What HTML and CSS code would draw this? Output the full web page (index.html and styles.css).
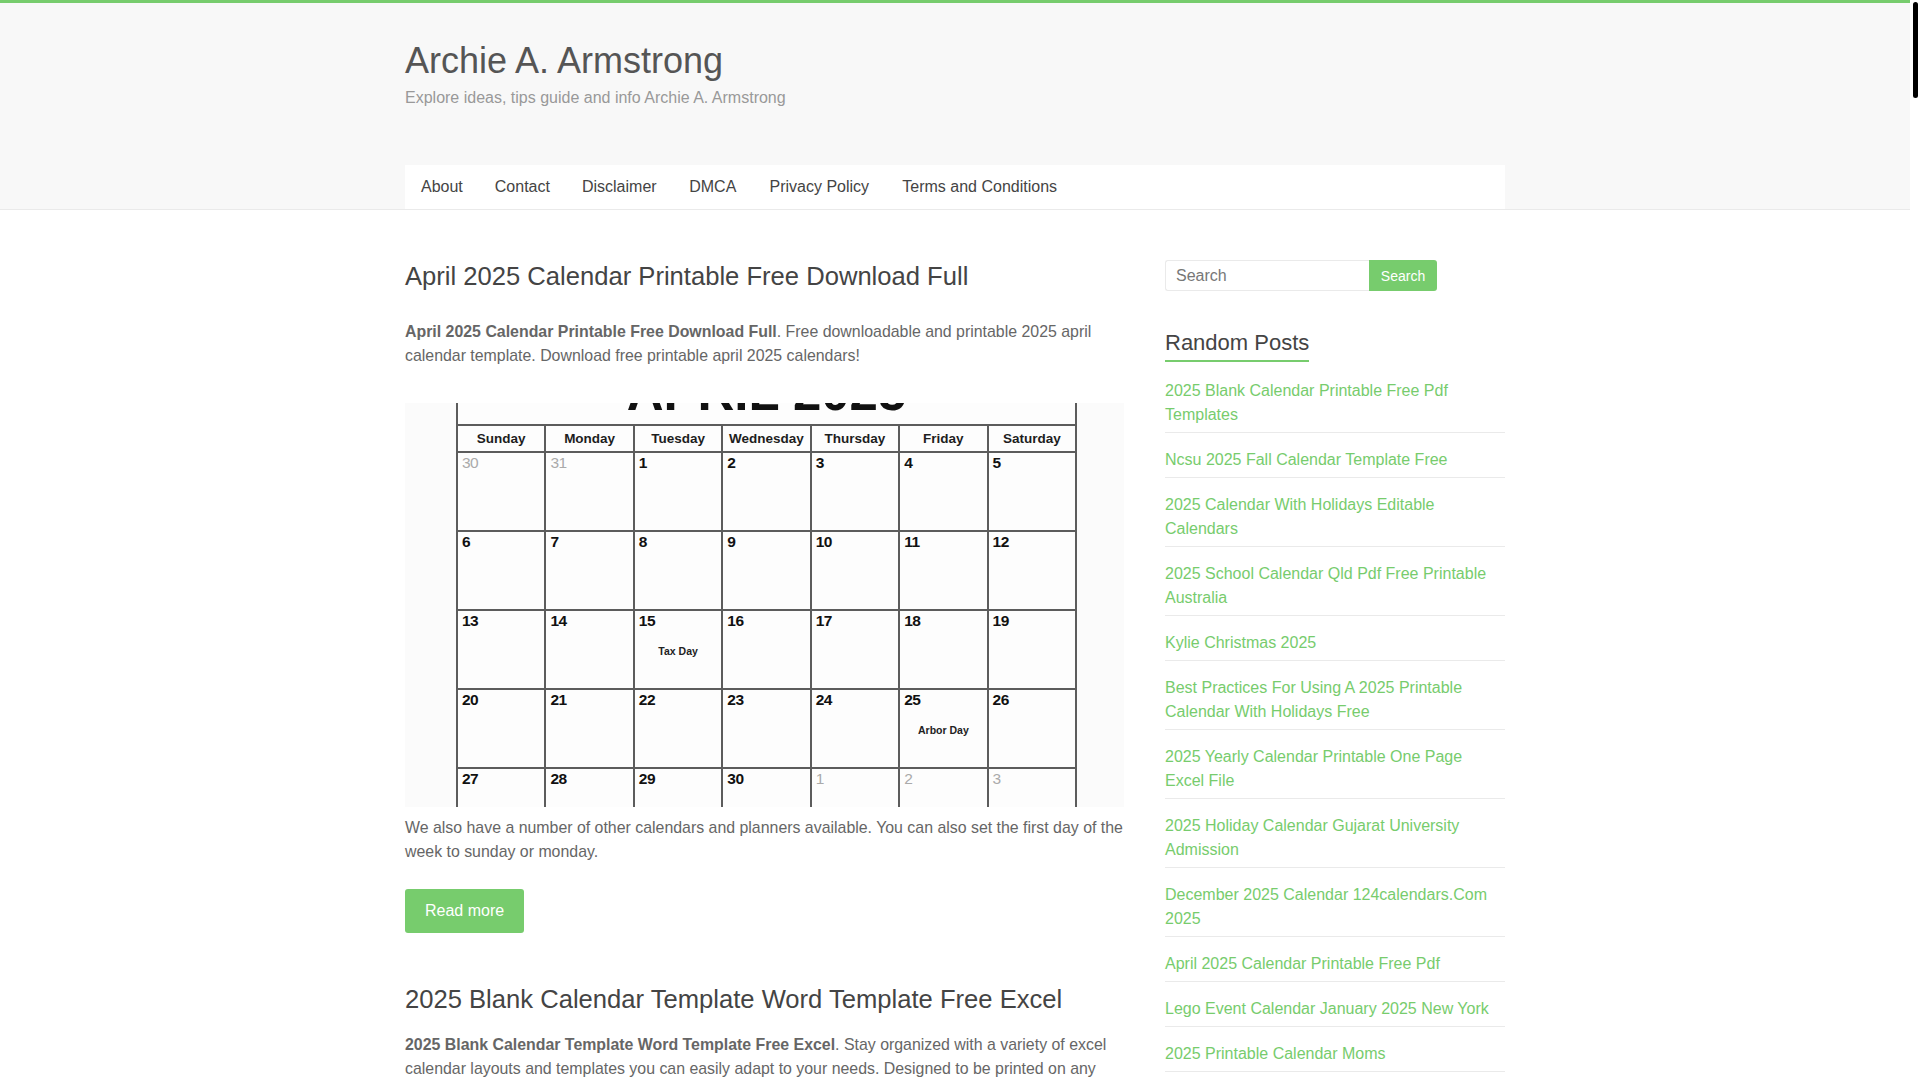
FILE: index.html
```html
<!DOCTYPE html>
<html lang="en">
<head>
<meta charset="utf-8">
<title>Archie A. Armstrong</title>
<link rel="stylesheet" href="styles.css">
</head>
<body>
<div class="page">
<header class="site-header">
  <div class="container header-inner">
    <div class="branding">
      <h1 class="site-title"><a href="#">Archie A. Armstrong</a></h1>
      <p class="site-description">Explore ideas, tips guide and info Archie A. Armstrong</p>
    </div>
    <nav class="main-nav">
      <ul>
        <li><a href="#">About</a></li>
        <li><a href="#">Contact</a></li>
        <li><a href="#">Disclaimer</a></li>
        <li><a href="#">DMCA</a></li>
        <li><a href="#">Privacy Policy</a></li>
        <li><a href="#">Terms and Conditions</a></li>
      </ul>
    </nav>
  </div>
</header>

<div class="container site-main">
  <main class="primary">
    <article class="post">
      <h2 class="entry-title"><a href="#">April 2025 Calendar Printable Free Download Full</a></h2>
      <p><strong>April 2025 Calendar Printable Free Download Full</strong>. Free downloadable and printable 2025 april calendar template. Download free printable april 2025 calendars!</p>
      <div class="post-image">
        <div class="cal">
          <div class="cal-title"><span>APRIL 2025</span></div>
          <div class="cal-grid">
            <div class="cal-head">Sunday</div>
            <div class="cal-head">Monday</div>
            <div class="cal-head">Tuesday</div>
            <div class="cal-head">Wednesday</div>
            <div class="cal-head">Thursday</div>
            <div class="cal-head">Friday</div>
            <div class="cal-head">Saturday</div>

            <div class="cal-cell"><span class="num muted">30</span></div>
            <div class="cal-cell"><span class="num muted">31</span></div>
            <div class="cal-cell"><span class="num">1</span></div>
            <div class="cal-cell"><span class="num">2</span></div>
            <div class="cal-cell"><span class="num">3</span></div>
            <div class="cal-cell"><span class="num">4</span></div>
            <div class="cal-cell"><span class="num">5</span></div>

            <div class="cal-cell"><span class="num">6</span></div>
            <div class="cal-cell"><span class="num">7</span></div>
            <div class="cal-cell"><span class="num">8</span></div>
            <div class="cal-cell"><span class="num">9</span></div>
            <div class="cal-cell"><span class="num">10</span></div>
            <div class="cal-cell"><span class="num">11</span></div>
            <div class="cal-cell"><span class="num">12</span></div>

            <div class="cal-cell"><span class="num">13</span></div>
            <div class="cal-cell"><span class="num">14</span></div>
            <div class="cal-cell"><span class="num">15</span><span class="note">Tax Day</span></div>
            <div class="cal-cell"><span class="num">16</span></div>
            <div class="cal-cell"><span class="num">17</span></div>
            <div class="cal-cell"><span class="num">18</span></div>
            <div class="cal-cell"><span class="num">19</span></div>

            <div class="cal-cell"><span class="num">20</span></div>
            <div class="cal-cell"><span class="num">21</span></div>
            <div class="cal-cell"><span class="num">22</span></div>
            <div class="cal-cell"><span class="num">23</span></div>
            <div class="cal-cell"><span class="num">24</span></div>
            <div class="cal-cell"><span class="num">25</span><span class="note">Arbor Day</span></div>
            <div class="cal-cell"><span class="num">26</span></div>

            <div class="cal-cell"><span class="num">27</span></div>
            <div class="cal-cell"><span class="num">28</span></div>
            <div class="cal-cell"><span class="num">29</span></div>
            <div class="cal-cell"><span class="num">30</span></div>
            <div class="cal-cell"><span class="num muted">1</span></div>
            <div class="cal-cell"><span class="num muted">2</span></div>
            <div class="cal-cell"><span class="num muted">3</span></div>
          </div>
        </div>
      </div>
      <p class="after-image">We also have a number of other calendars and planners available. You can also set the first day of the week to sunday or monday.</p>
      <a class="read-more" href="#">Read more</a>
    </article>

    <article class="post">
      <h2 class="entry-title tight"><a href="#">2025 Blank Calendar Template Word Template Free Excel</a></h2>
      <p><strong>2025 Blank Calendar Template Word Template Free Excel</strong>. Stay organized with a variety of excel calendar layouts and templates you can easily adapt to your needs. Designed to be printed on any standard paper size, these templates keep every month of the year in view.</p>
      <div class="post-image plain"></div>
      <p class="after-image">Each layout can be edited in Microsoft Word or Excel before printing, so you can add your own holidays, notes and events.</p>
      <a class="read-more" href="#">Read more</a>
    </article>

    <article class="post">
      <h2 class="entry-title tight"><a href="#">2025 Blank Calendar Printable Free Pdf Templates</a></h2>
      <p><strong>2025 Blank Calendar Printable Free Pdf Templates</strong>. Blank monthly and yearly calendars for 2025 in pdf format, ready to print at home or at the office.</p>
      <div class="post-image plain"></div>
      <p class="after-image">Choose a portrait or landscape layout and print as many copies as you need.</p>
      <a class="read-more" href="#">Read more</a>
    </article>

    <article class="post">
      <h2 class="entry-title tight"><a href="#">Ncsu 2025 Fall Calendar Template Free</a></h2>
      <p><strong>Ncsu 2025 Fall Calendar Template Free</strong>. Keep track of the fall semester with a free printable academic calendar template.</p>
      <div class="post-image plain"></div>
      <p class="after-image">All important dates for classes, exams and breaks are easy to add.</p>
      <a class="read-more" href="#">Read more</a>
    </article>

    <nav class="pagination">
      <a href="#">&larr; Older posts</a>
    </nav>
  </main>

  <aside class="secondary">
    <section class="widget widget-search">
      <form class="search-form" action="#">
        <input class="search-field" type="text" placeholder="Search">
        <button class="search-submit" type="button">Search</button>
      </form>
    </section>
    <section class="widget widget-random">
      <h3 class="widget-title"><span>Random Posts</span></h3>
      <ul>
        <li><a href="#">2025 Blank Calendar Printable Free Pdf Templates</a></li>
        <li><a href="#">Ncsu 2025 Fall Calendar Template Free</a></li>
        <li><a href="#">2025 Calendar With Holidays Editable Calendars</a></li>
        <li><a href="#">2025 School Calendar Qld Pdf Free Printable Australia</a></li>
        <li><a href="#">Kylie Christmas 2025</a></li>
        <li><a href="#">Best Practices For Using A 2025 Printable Calendar With Holidays Free</a></li>
        <li><a href="#">2025 Yearly Calendar Printable One Page Excel File</a></li>
        <li><a href="#">2025 Holiday Calendar Gujarat University Admission</a></li>
        <li><a href="#">December 2025 Calendar 124calendars.Com 2025</a></li>
        <li><a href="#">April 2025 Calendar Printable Free Pdf</a></li>
        <li><a href="#">Lego Event Calendar January 2025 New York</a></li>
        <li><a href="#">2025 Printable Calendar Moms</a></li>
      </ul>
    </section>
  </aside>
</div>

<footer class="site-footer">
  <div class="container footer-inner">Copyright &copy; 2025 Archie A. Armstrong. All Rights Reserved.</div>
</footer>
</div>
<div class="scroll-rail" aria-hidden="true"><div class="scroll-thumb"></div></div>
</body>
</html>
```

FILE: styles.css
```css
html, body {
  margin: 0;
  padding: 0;
  height: 100%;
  overflow: hidden;
}
body {
  display: flex;
  background: #fff;
  color: #666;
  font-family: "Liberation Sans", Arial, sans-serif;
  font-size: 16px;
  line-height: 24px;
}
.page {
  flex: 1;
  min-width: 0;
  height: 100vh;
  overflow-y: auto;
  scrollbar-width: none;
}
.page::-webkit-scrollbar {
  display: none;
}
.scroll-rail {
  flex: 0 0 10px;
  height: 100vh;
  background: #fff;
}
.scroll-thumb {
  width: 5px;
  height: 96px;
  margin: 2px 0 0 3px;
  background: #000;
  border-radius: 3px;
}
a {
  text-decoration: none;
}
.container {
  width: 1100px;
  margin: 0 auto;
}

/* Header */
.site-header {
  background: #f8f8f8;
  border-top: 3px solid #77cc6d;
  border-bottom: 1px solid #eaeaea;
}
.header-inner {
  padding-top: 36px;
}
.site-title {
  margin: 0;
  font-size: 36px;
  line-height: 1.2;
  font-weight: normal;
}
.site-title a {
  color: #555;
}
.site-description {
  margin: 4px 0 0;
  font-size: 16px;
  line-height: 24px;
  color: #999;
}
.main-nav {
  margin-top: 55px;
  background: #fff;
  height: 44px;
}
.main-nav ul {
  display: flex;
  margin: 0;
  padding: 0;
  list-style: none;
}
.main-nav a {
  display: block;
  padding: 10px 16px;
  line-height: 24px;
  color: #444;
  font-size: 16px;
}
.main-nav li:nth-child(n+4) a {
  padding-left: 16.6px;
  padding-right: 16.6px;
}

/* Main layout */
.site-main {
  display: flex;
  justify-content: space-between;
  align-items: flex-start;
  padding-top: 50px;
}
.primary {
  width: 720px;
}
.secondary {
  width: 340px;
}

/* Posts */
.post {
  margin-bottom: 50px;
}
.entry-title {
  margin: 0 0 27px;
  font-size: 25.6px;
  line-height: 1.3;
  font-weight: normal;
}
.entry-title.tight {
  margin-bottom: 16px;
}
.entry-title a {
  color: #444;
}
.post p {
  margin: 0;
  font-size: 15.9px;
}
.post strong {
  color: #666;
}
.post-image {
  margin-top: 35px;
  width: 719px;
  height: 404px;
  overflow: hidden;
  background: #fbfbfb;
}
.post-image.plain {
  background: #f4f4f4;
}
.post .after-image {
  margin-top: 9px;
}
.read-more {
  display: inline-block;
  margin-top: 25px;
  padding: 10px 20px;
  line-height: 24px;
  background: #77cc6d;
  color: #fff;
  border-radius: 3px;
}
.pagination {
  padding-bottom: 40px;
}
.pagination a {
  color: #77cc6d;
}

/* Calendar picture */
.cal {
  margin-left: 51px;
  width: 621px;
  box-sizing: border-box;
  border-left: 2px solid #5c5c5c;
  border-right: 2px solid #5c5c5c;
  background: #fdfdfd;
  font-family: "Liberation Sans", Arial, sans-serif;
}
.cal-title {
  height: 21px;
  overflow: hidden;
  text-align: center;
}
.cal-title span {
  display: block;
  margin-top: -36px;
  font-size: 51px;
  line-height: 51px;
  font-weight: bold;
  color: #111;
}
.cal-grid {
  display: grid;
  grid-template-columns: repeat(7, 1fr);
  grid-template-rows: 25px repeat(5, 77px);
  gap: 2px;
  background: #5c5c5c;
  border-top: 2px solid #5c5c5c;
}
.cal-head {
  background: #fdfdfd;
  text-align: center;
  font-size: 13.5px;
  line-height: 25px;
  font-weight: bold;
  color: #1e1e1e;
}
.cal-cell {
  background: #fdfdfd;
  display: flex;
  flex-direction: column;
}
.num {
  padding: 2px 4px;
  font-size: 15.5px;
  line-height: 15px;
  font-weight: bold;
  letter-spacing: -0.5px;
  color: #111;
}
.num.muted {
  color: #aaa;
  font-weight: normal;
}
.note {
  margin-top: 15px;
  text-align: center;
  font-size: 10.5px;
  line-height: 12px;
  font-weight: bold;
  color: #222;
}

/* Sidebar */
.widget {
  margin-bottom: 38px;
}
.widget-search {
  margin-bottom: 39px;
}
.search-form {
  display: flex;
  height: 31px;
}
.search-field {
  box-sizing: border-box;
  width: 204px;
  height: 31px;
  margin: 0;
  padding: 0 10px;
  border: 1px solid #eaeaea;
  border-right: none;
  border-radius: 3px 0 0 3px;
  font-family: "Liberation Sans", Arial, sans-serif;
  font-size: 16px;
  color: #666;
  outline: none;
}
.search-field::placeholder {
  color: #777;
}
.search-submit {
  box-sizing: border-box;
  width: 68px;
  height: 31px;
  margin: 0;
  padding: 0;
  border: none;
  border-radius: 0 3px 3px 0;
  background: #77cc6d;
  color: #fff;
  font-family: "Liberation Sans", Arial, sans-serif;
  font-size: 14px;
}
.widget-title {
  display: flex;
  margin: 0;
  font-size: 22px;
  font-weight: normal;
  color: #444;
}
.widget-title span {
  line-height: 1.2;
  padding-bottom: 3px;
  border-bottom: 2px solid #77cc6d;
}
.widget-random ul {
  margin: 2px 0 0;
  padding: 0;
  list-style: none;
}
.widget-random li {
  padding: 15px 0 5px;
  border-bottom: 1px solid #eaeaea;
}
.widget-random a {
  color: #77cc6d;
}

/* Footer */
.site-footer {
  background: #f8f8f8;
  border-top: 1px solid #eaeaea;
}
.footer-inner {
  padding: 30px 0;
  font-size: 14px;
  color: #777;
}
```
